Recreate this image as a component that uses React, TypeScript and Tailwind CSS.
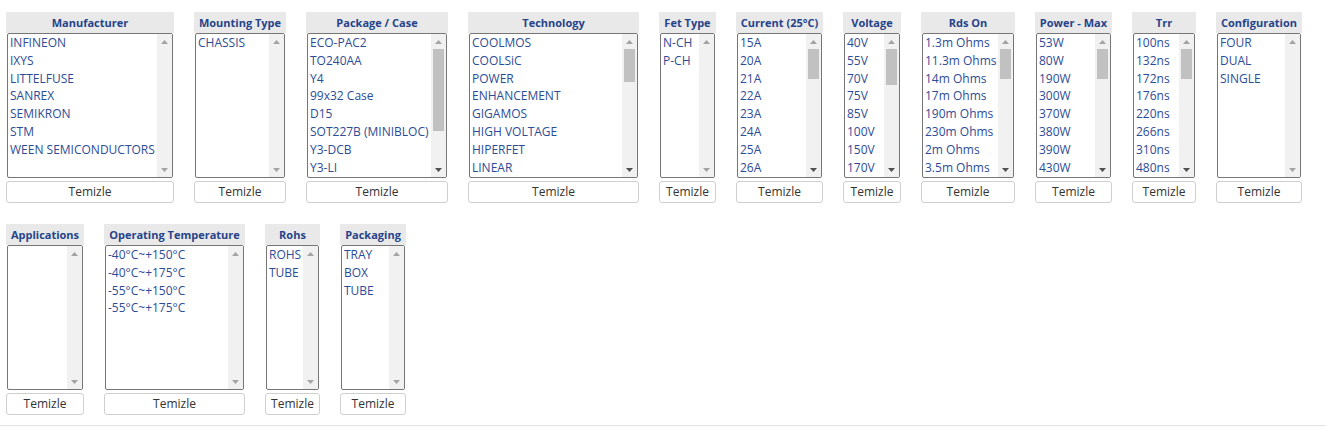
import React from "react";

type Filter = {
  title: string;
  width: number;
  items: string[];
};

const row1: Filter[] = [
  {
    title: "Manufacturer",
    width: 168,
    items: ["INFINEON", "IXYS", "LITTELFUSE", "SANREX", "SEMIKRON", "STM", "WEEN SEMICONDUCTORS"],
  },
  { title: "Mounting Type", width: 92, items: ["CHASSIS"] },
  {
    title: "Package / Case",
    width: 142,
    items: ["ECO-PAC2", "TO240AA", "Y4", "99x32 Case", "D15", "SOT227B (MINIBLOC)", "Y3-DCB", "Y3-LI", "Y3-M5", "SMPD", "ISOPLUS"],
  },
  {
    title: "Technology",
    width: 171,
    items: [
      "COOLMOS", "COOLSiC", "POWER", "ENHANCEMENT", "GIGAMOS", "HIGH VOLTAGE", "HIPERFET", "LINEAR",
      "LINEAR L2", "MEGAMOS", "MOSFET", "OPTIMOS", "POLAR", "POLAR3", "POLARHT", "POLARP", "Q-CLASS",
      "Q2-CLASS", "Q3-CLASS", "SiC", "STANDARD", "SUPERJUNCTION", "TRENCH", "TRENCHMV", "TRENCHP",
      "TRENCHT2", "X-CLASS",
    ],
  },
  { title: "Fet Type", width: 57, items: ["N-CH", "P-CH"] },
  {
    title: "Current (25°C)",
    width: 87,
    items: [
      "15A", "20A", "21A", "22A", "23A", "24A", "25A", "26A", "27A", "30A", "32A", "34A", "36A", "38A", "40A",
      "44A", "48A", "50A", "55A", "60A", "64A", "70A", "80A", "90A", "100A", "120A", "150A", "180A", "200A", "240A",
    ],
  },
  {
    title: "Voltage",
    width: 58,
    items: [
      "40V", "55V", "70V", "75V", "85V", "100V", "150V", "170V", "200V", "250V", "300V", "400V", "500V",
      "550V", "600V", "650V", "800V", "900V", "1000V", "1100V", "1200V", "1500V", "1700V", "2500V", "3300V",
    ],
  },
  {
    title: "Rds On",
    width: 94,
    items: [
      "1.3m Ohms", "11.3m Ohms", "14m Ohms", "17m Ohms", "190m Ohms", "230m Ohms", "2m Ohms", "3.5m Ohms",
      "4m Ohms", "4.5m Ohms", "5m Ohms", "6m Ohms", "7m Ohms", "8m Ohms", "9m Ohms", "10m Ohms", "12m Ohms",
      "20m Ohms", "25m Ohms", "30m Ohms", "40m Ohms", "50m Ohms", "60m Ohms", "75m Ohms", "90m Ohms",
      "100m Ohms", "120m Ohms", "150m Ohms", "300m Ohms", "1 Ohms",
    ],
  },
  {
    title: "Power - Max",
    width: 77,
    items: [
      "53W", "80W", "190W", "300W", "370W", "380W", "390W", "430W", "450W", "480W", "500W", "520W", "540W",
      "570W", "600W", "625W", "680W", "700W", "735W", "780W", "830W", "890W", "960W", "1040W", "1130W",
      "1250W", "1380W", "1500W", "1670W", "2000W",
    ],
  },
  {
    title: "Trr",
    width: 64,
    items: [
      "100ns", "132ns", "172ns", "176ns", "220ns", "266ns", "310ns", "480ns", "500ns", "550ns", "600ns",
      "650ns", "700ns", "750ns", "800ns", "850ns", "900ns", "950ns", "1000ns", "1100ns", "1200ns", "1300ns",
      "1400ns", "1500ns", "1600ns", "1700ns", "1800ns", "1900ns", "2000ns", "2500ns",
    ],
  },
  { title: "Configuration", width: 86, items: ["FOUR", "DUAL", "SINGLE"] },
];

const row2: Filter[] = [
  { title: "Applications", width: 78, items: [] },
  {
    title: "Operating Temperature",
    width: 141,
    items: ["-40°C~+150°C", "-40°C~+175°C", "-55°C~+150°C", "-55°C~+175°C"],
  },
  { title: "Rohs", width: 55, items: ["ROHS", "TUBE"] },
  { title: "Packaging", width: 66, items: ["TRAY", "BOX", "TUBE"] },
];

const VISIBLE = 8;
const TRACK = 113; // 143 inner height - 2 arrow buttons of 15px

// little triangle for the scrollbar buttons
const Arrow = ({ up, color }: { up?: boolean; color: string }) => (
  <div className="h-[15px] flex items-center justify-center">
    <svg width="7" height="4" viewBox="0 0 7 4">
      {up ? <polygon points="3.5,0 7,4 0,4" fill={color} /> : <polygon points="0,0 7,0 3.5,4" fill={color} />}
    </svg>
  </div>
);

const ListBox = ({ items }: { items: string[] }) => {
  const scrollable = items.length > VISIBLE;
  const thumb = scrollable ? Math.round((TRACK * VISIBLE) / items.length) : 0;
  return (
    <div className="mx-px h-[145px] border border-[#767676] rounded-[2px] bg-white flex overflow-hidden">
      <div className="flex-1 min-w-0 overflow-hidden">
        {items.slice(0, VISIBLE).map((item) => (
          <div key={item} className="h-[17.8px] leading-[18px] pl-[2px] text-[12px] text-[#2d4c97] whitespace-nowrap">
            {item}
          </div>
        ))}
      </div>
      <div className="w-[15px] shrink-0 bg-[#f1f1f1] flex flex-col">
        <Arrow up color="#a3a3a3" />
        <div className="flex-1 px-[2px]">
          {scrollable && <div className="bg-[#c1c1c1]" style={{ height: thumb }} />}
        </div>
        <Arrow color={scrollable ? "#505050" : "#a3a3a3"} />
      </div>
    </div>
  );
};

const FilterBox = ({ filter }: { filter: Filter }) => {
  return (
    <div className="flex flex-col shrink-0" style={{ width: filter.width }}>
      <div className="bg-[#e9e9e9] h-[21px] leading-[21px] text-center text-[11px] font-bold text-[#26438a] whitespace-nowrap overflow-hidden">
        {filter.title}
      </div>
      <ListBox items={filter.items} />
      <button className="mt-[3px] h-[22px] border border-[#cfcfcf] rounded-[3px] bg-white text-[12px] text-[#333] leading-[20px]">
        Temizle
      </button>
    </div>
  );
};

export default function App() {
  return (
    <div className="w-[1326px] h-[427px] bg-white font-['Open_Sans',sans-serif]">
      <div className="pt-[12px] pl-[6px] pb-[10px] border-b border-[#e2e2e2] flex flex-col gap-[21px]">
        <div className="flex gap-[20px]">
          {row1.map((f) => (
            <FilterBox key={f.title} filter={f} />
          ))}
        </div>
        <div className="flex gap-[20px]">
          {row2.map((f) => (
            <FilterBox key={f.title} filter={f} />
          ))}
        </div>
      </div>
    </div>
  );
}
